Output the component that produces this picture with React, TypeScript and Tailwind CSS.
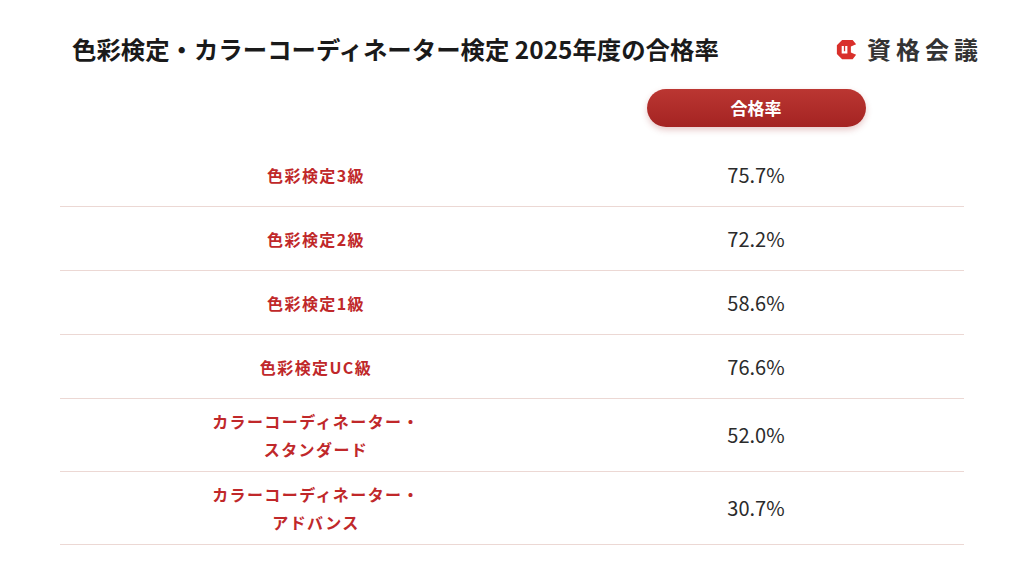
import React from "react";

const rows: { label: string[]; value: string }[] = [
  { label: ["色彩検定3級"], value: "75.7%" },
  { label: ["色彩検定2級"], value: "72.2%" },
  { label: ["色彩検定1級"], value: "58.6%" },
  { label: ["色彩検定UC級"], value: "76.6%" },
  { label: ["カラーコーディネーター・", "スタンダード"], value: "52.0%" },
  { label: ["カラーコーディネーター・", "アドバンス"], value: "30.7%" },
];

function Logo() {
  return (
    <div className="flex items-center gap-[10px]">
      <svg width="21" height="21" viewBox="0 0 24 24">
        <path d="M7 1 L19 1 L23 6 L17 8.5 L17 15.5 L23 18 L19 23 L7 23 L1 17 L1 7 Z" fill="#d9302b" />
        <path d="M6.5 8 L9 8 L9 14 L10.5 14 L10.5 8 L13 8 L13 16.5 L6.5 16.5 Z" fill="#ffffff" />
      </svg>
      <span className="text-[24px] font-semibold tracking-[5px] text-[#333333] leading-none mr-[-5px]">資格会議</span>
    </div>
  );
}

export default function App() {
  return (
    <div className="w-[1024px] h-[576px] bg-white font-['Noto_Sans_CJK_JP','Noto_Sans',sans-serif] overflow-hidden">
      <div className="flex items-center justify-between pl-[72px] pr-[46px] pt-[32px]">
        <h1 className="text-[24.4px] leading-[34px] font-bold text-[#1a1a1a]">
          色彩検定・カラーコーディネーター検定 2025年度の合格率
        </h1>
        <Logo />
      </div>
      <div className="mx-[60px] mt-[23px]">
        <div className="grid grid-cols-[512px_368px_1fr]">
          <div />
          <div className="flex justify-center">
            <div className="w-[219px] h-[38px] rounded-full bg-gradient-to-b from-[#bb3632] to-[#a42322] shadow-[0_3px_6px_rgba(160,40,40,0.25)] flex items-center justify-center text-white font-bold text-[17px]">
              合格率
            </div>
          </div>
          <div />
        </div>
        <div className="mt-[16px]">
          {rows.map((r, i) => (
            <div
              key={i}
              className={`grid grid-cols-[512px_368px_1fr] border-b border-[#ecd8d4] ${r.label.length > 1 ? "h-[73px]" : "h-[64px]"}`}
            >
              <div className="flex flex-col items-center justify-center text-[#c0282a] font-bold text-[16px] leading-[28px] tracking-[1.4px]">
                {r.label.map((l, j) => (
                  <span key={j}>{l}</span>
                ))}
              </div>
              <div className="flex items-center justify-center text-[20px] text-[#2b2b2b]">{r.value}</div>
              <div />
            </div>
          ))}
        </div>
      </div>
    </div>
  );
}
